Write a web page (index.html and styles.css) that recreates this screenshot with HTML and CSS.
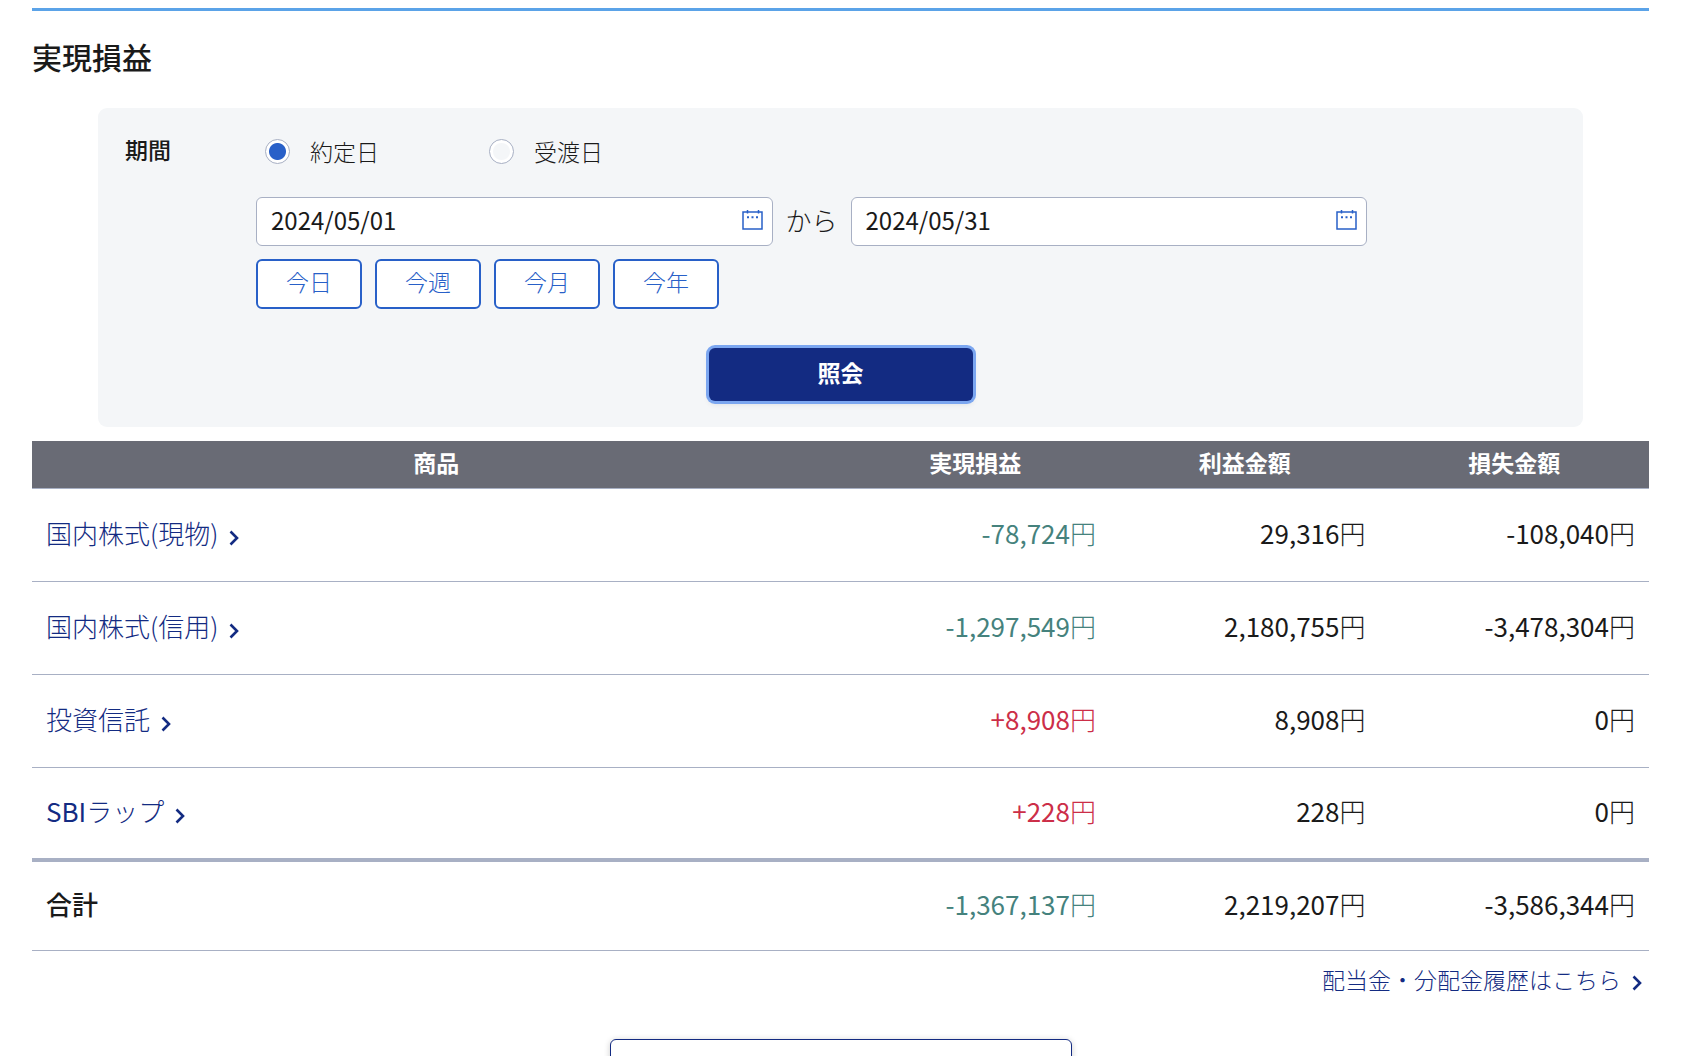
FILE: index.html
```html
<!DOCTYPE html>
<html lang="ja">
<head>
<meta charset="utf-8">
<title>実現損益</title>
<meta name="viewport" content="width=device-width, initial-scale=1">
<link rel="stylesheet" href="styles.css">
</head>
<body>
<svg class="defs" aria-hidden="true">
  <symbol id="chevron" viewBox="0 0 10 16"><path d="M1.500 1.500 8 8l-6.500 6.500" fill="none" stroke="currentColor" stroke-width="2.600"/></symbol>
  <symbol id="calendar" viewBox="0 0 21 20"><path d="M1 2h19v17H1zM5.500 0v3.500M16.500 0v3.500" fill="none" stroke="currentColor" stroke-width="1.500"/><path d="M5 6.300h2v2H5zM9.500 6.300h2v2h-2zM14 6.300h2v2h-2z" fill="currentColor"/></symbol>
</svg>
<main class="page">
  <h1 class="title">実現損益</h1>

  <form class="search">
    <div class="period">
      <div class="period-label">期間</div>
      <div class="period-fields">
        <div class="radios">
          <label class="radio"><input type="radio" name="basis" checked>約定日</label>
          <label class="radio"><input type="radio" name="basis">受渡日</label>
        </div>
        <div class="dates">
          <div class="date">
            <input type="text" value="2024/05/01" aria-label="期間 から">
            <svg class="calendar" aria-hidden="true"><use href="#calendar"/></svg>
          </div>
          <span class="from">から</span>
          <div class="date">
            <input type="text" value="2024/05/31" aria-label="期間 まで">
            <svg class="calendar" aria-hidden="true"><use href="#calendar"/></svg>
          </div>
        </div>
        <div class="presets">
          <button type="button">今日</button>
          <button type="button">今週</button>
          <button type="button">今月</button>
          <button type="button">今年</button>
        </div>
      </div>
    </div>
    <button type="button" class="submit">照会</button>
  </form>

  <table class="summary">
    <thead>
      <tr><th class="product">商品</th><th>実現損益</th><th>利益金額</th><th>損失金額</th></tr>
    </thead>
    <tbody>
      <tr><td><a href="#">国内株式(現物)<svg class="chevron" aria-hidden="true"><use href="#chevron"/></svg></a></td><td class="minus"><span class="num">-78,724</span>円</td><td><span class="num">29,316</span>円</td><td><span class="num">-108,040</span>円</td></tr>
      <tr><td><a href="#">国内株式(信用)<svg class="chevron" aria-hidden="true"><use href="#chevron"/></svg></a></td><td class="minus"><span class="num">-1,297,549</span>円</td><td><span class="num">2,180,755</span>円</td><td><span class="num">-3,478,304</span>円</td></tr>
      <tr><td><a href="#">投資信託<svg class="chevron" aria-hidden="true"><use href="#chevron"/></svg></a></td><td class="plus"><span class="num">+8,908</span>円</td><td><span class="num">8,908</span>円</td><td><span class="num">0</span>円</td></tr>
      <tr><td><a href="#"><span class="num">SBI</span>ラップ<svg class="chevron" aria-hidden="true"><use href="#chevron"/></svg></a></td><td class="plus"><span class="num">+228</span>円</td><td><span class="num">228</span>円</td><td><span class="num">0</span>円</td></tr>
    </tbody>
    <tfoot>
      <tr><th scope="row">合計</th><td class="minus"><span class="num">-1,367,137</span>円</td><td><span class="num">2,219,207</span>円</td><td><span class="num">-3,586,344</span>円</td></tr>
    </tfoot>
  </table>

  <p class="history"><a href="#">配当金・分配金履歴はこちら<svg class="chevron" aria-hidden="true"><use href="#chevron"/></svg></a></p>
  <button type="button" class="more"></button>
</main>
</body>
</html>
```
FILE: styles.css
```css
* {
  box-sizing: border-box;
}

body {
  margin: 0;
  background: #fff;
  color: #1a1a1a;
  font-family: "Noto Sans CJK JP", sans-serif;
  font-size: 23px;
  font-weight: 300;
  line-height: 32px;
}

button,
input {
  font: inherit;
  color: inherit;
}

a {
  color: #132b82;
  text-decoration: none;
}

.defs {
  display: none;
}

.page {
  margin: 8px 52px 0 32px;
  border-top: 3px solid #5ba3e8;
}

.title {
  margin: 0;
  padding: 25px 0 32px;
  font-size: 30px;
  font-weight: 500;
  line-height: 40px;
}

.search {
  margin: 0 66px 14px;
  padding: 25px 27px 26px;
  border-radius: 9px;
  background: #f4f6f8;
}

.period {
  display: flex;
}

.period-label {
  flex: 0 0 131px;
  font-weight: 500;
}

.period-fields {
  flex: 1;
}

.radios {
  display: flex;
  padding: 2px 0 0 9px;
}

.radio {
  display: flex;
  align-items: center;
  width: 224px;
  gap: 20px;
}

.radio input {
  appearance: none;
  width: 25px;
  height: 25px;
  margin: 0;
  border: 1px solid #a8b0c4;
  border-radius: 50%;
  background: radial-gradient(circle, #f4f6f8 8px, #fff 9px);
}

.radio input:checked {
  background: radial-gradient(circle, #2860c8 8px, #fff 9px);
}

.dates {
  display: flex;
  align-items: center;
  gap: 13px;
  margin: 30px 189px 13px 0;
}

.date {
  position: relative;
  flex: 1;
}

.date input {
  display: block;
  width: 100%;
  height: 49px;
  padding: 0 48px 4px 14px;
  border: 1px solid #a8b0c4;
  border-radius: 6px;
  background: #fff;
  font-size: 24px;
  font-weight: 400;
}

.calendar {
  position: absolute;
  top: 13px;
  right: 10px;
  width: 21px;
  height: 20px;
  color: #2860c8;
}

.from {
  padding-bottom: 4px;
  font-size: 26px;
}

.presets {
  display: flex;
  gap: 13px;
}

.presets button {
  width: 106px;
  height: 50px;
  padding: 0 0 6px;
  border: 2px solid #2860c8;
  border-radius: 6px;
  background: #fff;
  color: #2860c8;
}

.submit {
  display: block;
  width: 264px;
  height: 53px;
  margin: 39px auto 0;
  padding: 0 0 6px;
  border: 0;
  border-radius: 6px;
  background: #132b82;
  box-shadow: 0 0 0 3px #7ba6f0, 0 3px 6px rgba(0, 0, 0, 0.1);
  color: #fff;
  font-weight: 700;
}

.summary {
  width: 100%;
  table-layout: fixed;
  border-collapse: separate;
  border-spacing: 0;
  font-size: 26px;
}

.summary th,
.summary td {
  padding: 0 14px 4px;
  border-bottom: 1px solid #a8b0c4;
  text-align: right;
}

.summary thead th {
  height: 48px;
  padding-bottom: 6px;
  background: #696b75;
  color: #fff;
  font-size: 23px;
  font-weight: 700;
  text-align: center;
}

.summary .product {
  width: 50%;
}

.summary tbody td {
  height: 93px;
}

.summary tbody tr:last-child td {
  height: 94px;
  border-bottom-width: 4px;
}

.summary tfoot th,
.summary tfoot td {
  height: 89px;
}

.summary tbody td:first-child,
.summary tfoot th {
  text-align: left;
}

.summary tfoot th {
  font-weight: 500;
}

.summary .num {
  font-weight: 400;
}

.summary .minus {
  color: #45827d;
}

.summary .plus {
  color: #cc2e48;
}

.chevron {
  width: 10px;
  height: 16px;
  margin-left: 11px;
  vertical-align: -2px;
}

.history {
  margin: 12px 7px 44px 0;
  text-align: right;
}

.more {
  display: block;
  width: 462px;
  height: 60px;
  margin: 0 auto;
  border: 1px solid #132b82;
  border-radius: 6px;
  background: #fff;
  box-shadow: 0 1px 6px rgba(0, 0, 0, 0.2);
}
```
